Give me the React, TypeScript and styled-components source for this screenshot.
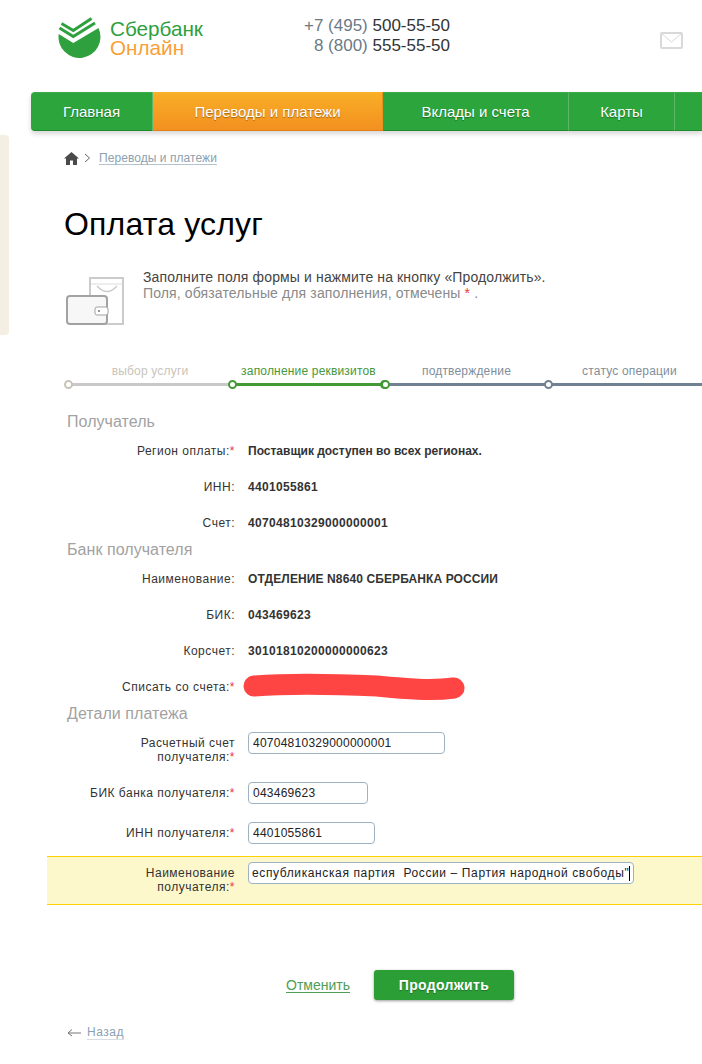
import React from 'react'
import styled, {createGlobalStyle} from 'styled-components'

const GlobalStyle = createGlobalStyle`
  html, body {
    margin: 0;
    padding: 0;
    background: #fff;
  }
  * {
    box-sizing: border-box;
  }
`

const Page = styled.div`
  position: relative;
  width: 702px;
  height: 1064px;
  overflow: hidden;
  background: #fff;
  font-family: 'Liberation Sans', Arial, sans-serif;
  font-size: 12px;
  color: #333;
`

const SideTab = styled.div`
  position: absolute;
  left: 0;
  top: 135px;
  width: 9px;
  height: 200px;
  background: #f5efe3;
  border-radius: 0 4px 4px 0;
`

const Header = styled.header`
  display: flex;
  height: 92px;
  padding-left: 58px;
`

const Logo = styled.div`
  display: flex;
  gap: 8px;
  width: 244px;
  padding-top: 15px;
`

const LogoText = styled.div`
  display: flex;
  flex-direction: column;
  padding-top: 4px;
  font-size: 20.7px;
  line-height: 19px;
`

const LogoLine = styled.span<{$orange?: boolean}>`
  color: ${(p) => (p.$orange ? '#f99f38' : '#2ea03e')};
`

const Phones = styled.div`
  width: 148px;
  padding-top: 16px;
  font-size: 17px;
  line-height: 20px;
  text-align: right;
  color: #333;
`

const PhoneCode = styled.span`
  color: #6c7a86;
`

const MailBox = styled.div`
  margin-left: 210px;
  padding-top: 32px;
`

const Nav = styled.nav`
  display: flex;
  height: 39px;
  margin-left: 31px;
  border-radius: 4px 0 0 4px;
  box-shadow: 0 3px 5px rgba(0, 0, 0, 0.16);
`

const NavItem = styled.a<{$w: number; $active?: boolean; $first?: boolean}>`
  display: flex;
  flex: 0 0 ${(p) => p.$w}px;
  align-items: center;
  justify-content: center;
  font-size: 15px;
  color: #fff;
  text-shadow: 0 1px 1px rgba(0, 0, 0, 0.35);
  border-top: 1px solid ${(p) => (p.$active ? '#f9b12a' : '#3cab4b')};
  border-bottom: 1px solid ${(p) => (p.$active ? '#e07f1a' : '#1f8a30')};
  border-right: 1px solid ${(p) => (p.$active ? '#e8901f' : '#5cb768')};
  background: ${(p) => (p.$active ? 'linear-gradient(#f8ae26, #f39020)' : '#2da53d')};
  border-radius: ${(p) => (p.$first ? '4px 0 0 4px' : '0')};
`

const Crumbs = styled.div`
  display: flex;
  align-items: center;
  height: 16px;
  margin-top: 19px;
  padding-left: 64px;
`

const CrumbLink = styled.a`
  margin-left: 6px;
  letter-spacing: 0.06px;
  color: #8ba1b0;
  text-decoration: underline;
  text-decoration-color: #b4c4ce;
  text-underline-offset: 2px;
`

const Title = styled.h1`
  height: 40px;
  margin: 38px 0 0;
  padding-left: 64px;
  font-size: 32px;
  font-weight: 400;
  line-height: 40px;
  letter-spacing: 0.17px;
  color: #000;
`

const Intro = styled.div`
  display: flex;
  height: 94px;
  margin-top: 25px;
  padding-left: 66px;
`

const IntroIcon = styled.div`
  flex: 0 0 77px;
  padding-top: 7px;
`

const IntroLine = styled.div<{$muted?: boolean}>`
  font-size: 14px;
  line-height: 16px;
  letter-spacing: 0.13px;
  color: ${(p) => (p.$muted ? '#8a8a8a' : '#444')};
`

const Asterisk = styled.span`
  color: #e8403a;
`

const Steps = styled.div`
  display: flex;
  height: 49px;
  width: 800px;
  margin-left: 68px;
`

const Step = styled.div<{$w: number}>`
  flex: 0 0 ${(p) => p.$w}px;
`

const StepLabel = styled.div<{$color: string}>`
  height: 16px;
  line-height: 16px;
  letter-spacing: 0.18px;
  text-align: center;
  color: ${(p) => p.$color};
`

const StepLine = styled.div<{$color: string}>`
  position: relative;
  height: 3px;
  margin-top: 4px;
  background: ${(p) => p.$color};
`

const StepNode = styled.span<{$color: string; $right?: boolean}>`
  position: absolute;
  top: -3px;
  ${(p) => (p.$right ? 'right: -4px;' : 'left: -4px;')}
  width: 9px;
  height: 9px;
  border: 2px solid ${(p) => p.$color};
  border-radius: 50%;
  background: #fff;
`

const SectionTitle = styled.h2`
  height: 20px;
  margin: 0;
  padding-left: 67px;
  font-size: 16px;
  font-weight: 400;
  line-height: 20px;
  letter-spacing: 0.05px;
  color: #a2a2a2;
`

const InfoRow = styled.div`
  display: grid;
  grid-template-columns: 235px 1fr;
  column-gap: 13px;
  align-items: center;
  height: 36px;
  padding-top: 1px;
`

const Label = styled.div`
  text-align: right;
  line-height: 14px;
  letter-spacing: 0.5px;
  color: #333;
`

const Required = styled.span`
  color: #f0323c;
`

const Value = styled.div<{$spacing?: number}>`
  font-weight: 700;
  letter-spacing: ${(p) => p.$spacing ?? 0.33}px;
  color: #333;
`

const Scribble = styled.div`
  height: 0;
  margin-left: -5px;
  transform: translateY(-14px);
`

const InputRow = styled.div<{$h: number; $top?: number}>`
  display: grid;
  grid-template-columns: 235px 1fr;
  column-gap: 13px;
  height: ${(p) => p.$h}px;
  margin-top: ${(p) => p.$top ?? 0}px;
`

const FieldLabel = styled(Label)`
  padding-top: 4px;
`

const Field = styled.input<{$w: number; $spacing?: number; $pad?: number}>`
  display: block;
  width: ${(p) => p.$w}px;
  height: 22px;
  padding: 0 ${(p) => p.$pad ?? 4}px;
  border: 1px solid #9fb2c2;
  border-radius: 4px;
  outline: none;
  background: #fff;
  font-family: inherit;
  font-size: 12px;
  letter-spacing: ${(p) => p.$spacing ?? 0.25}px;
  color: #222;
`

const HighlightRow = styled.div`
  display: grid;
  grid-template-columns: 188px 1fr;
  column-gap: 13px;
  height: 49px;
  margin-left: 47px;
  padding-top: 5px;
  border-top: 1px solid #ffd100;
  border-bottom: 1px solid #ffd100;
  background: #fdf7cc;
`

const CaretField = styled.div`
  position: relative;
  width: 386px;
`

const Caret = styled.span`
  position: absolute;
  top: 4px;
  right: 4px;
  width: 1px;
  height: 15px;
  background: #000;
`

const Actions = styled.div`
  display: flex;
  align-items: center;
  gap: 24px;
  margin-top: 65px;
  padding-left: 286px;
`

const CancelLink = styled.a`
  font-size: 14px;
  color: #4f9d57;
  text-decoration: underline;
  text-underline-offset: 2px;
`

const SubmitButton = styled.button`
  width: 140px;
  height: 30px;
  border: 0;
  border-radius: 3px;
  background: #2b9f36;
  box-shadow: 0 1px 3px rgba(0, 0, 0, 0.4);
  font-family: inherit;
  font-size: 14px;
  font-weight: 700;
  letter-spacing: 0.33px;
  color: #fff;
  text-shadow: 0 1px 1px rgba(0, 0, 0, 0.3);
`

const BackRow = styled.div`
  display: flex;
  align-items: center;
  gap: 6px;
  margin-top: 25px;
  padding-left: 67px;
`

const BackLink = styled.a`
  letter-spacing: 0.5px;
  color: #8ba1b0;
  border-bottom: 1px solid #d5dee4;
`

const navItems = [
  {label: 'Главная', w: 122, first: true},
  {label: 'Переводы и платежи', w: 230, active: true},
  {label: 'Вклады и счета', w: 186},
  {label: 'Карты', w: 106},
  {label: '', w: 60},
]

const steps = [
  {label: 'выбор услуги', w: 164, text: '#c9c4ba', line: '#c8c8c8', node: '#c8c4b8'},
  {label: 'заполнение реквизитов', w: 153, text: '#46983a', line: '#429a35', node: '#429a35', end: true},
  {label: 'подтверждение', w: 163, text: '#7f8e9b', line: '#708291', node: '#429a35'},
  {label: 'статус операции', w: 163, text: '#7f8e9b', line: '#708291', node: '#708291'},
]

const LogoMark = () => (
  <svg width="44" height="44" viewBox="58 15 44 44">
    <path d="M58.7 34 L73.3 43 L98.5 28 A21 21 0 1 1 58.7 34 Z" fill="#2ea03e" />
    <g fill="none" stroke="#2ea03e" strokeWidth="3">
      <path d="M61.5 23.5 L73.3 30.5 L91.5 18.5" />
      <path d="M59.5 28 L73.3 36.5 L95 23" />
    </g>
  </svg>
)

const MailIcon = () => (
  <svg width="23" height="17" viewBox="0 0 23 17" fill="none" stroke="#d9d9d9">
    <rect x="1" y="1" width="21" height="15" rx="1" strokeWidth="2" />
    <path d="M2 2 L11.5 10 L21 2" />
  </svg>
)

const HomeIcon = () => (
  <svg width="15" height="13" viewBox="0 0 15 13" fill="#4a4a4a">
    <path d="M7.5 0 L15 6.5 L13 6.5 L13 13 L9 13 L9 8.5 L6 8.5 L6 13 L2 13 L2 6.5 L0 6.5 Z" />
  </svg>
)

const CrumbArrow = () => (
  <svg width="14" height="10" viewBox="0 0 14 10" fill="none" stroke="#666">
    <path d="M6 1 L10.5 5 L6 9" />
  </svg>
)

const WalletIcon = () => (
  <svg width="60" height="52" viewBox="66 275 60 52">
    <rect x="90" y="277" width="33" height="46" fill="#fff" stroke="#cbcbcb" strokeWidth="2" />
    <path d="M91 283 H122" stroke="#dcdcdc" />
    <path d="M97 285 Q107 296 117 285" fill="none" stroke="#cbcbcb" strokeWidth="1.5" />
    <rect x="67" y="295" width="40" height="28" rx="3" fill="#f7f7f7" stroke="#a2a2a2" strokeWidth="2" />
    <rect x="95" y="306" width="13" height="8" rx="2" fill="#fff" stroke="#a2a2a2" />
    <circle cx="99" cy="310" r="1" fill="#777" />
  </svg>
)

const RedScribble = () => (
  <svg width="224" height="30" viewBox="241 673 224 30" fill="none">
    <path
      d="M252 686 C290 683 330 684 375 686 C405 689 430 691 452 688"
      stroke="#ff4444"
      strokeWidth="21"
      strokeLinecap="round"
    />
  </svg>
)

const BackArrow = () => (
  <svg width="14" height="9" viewBox="0 0 14 9" fill="none" stroke="#777">
    <path d="M14 5 H1 M5 1.5 L1 5 L5 8" />
  </svg>
)

const App = () => (
  <Page>
    <GlobalStyle />
    <SideTab />
    <Header>
      <Logo>
        <LogoMark />
        <LogoText>
          <LogoLine>Сбербанк</LogoLine>
          <LogoLine $orange>Онлайн</LogoLine>
        </LogoText>
      </Logo>
      <Phones>
        <div>
          <PhoneCode>+7 (495)</PhoneCode> 500-55-50
        </div>
        <div>
          <PhoneCode>8 (800)</PhoneCode> 555-55-50
        </div>
      </Phones>
      <MailBox>
        <MailIcon />
      </MailBox>
    </Header>

    <Nav>
      {navItems.map((item, i) => (
        <NavItem key={i} $w={item.w} $active={item.active} $first={item.first}>
          {item.label}
        </NavItem>
      ))}
    </Nav>

    <Crumbs>
      <HomeIcon />
      <CrumbArrow />
      <CrumbLink>Переводы и платежи</CrumbLink>
    </Crumbs>

    <Title>Оплата услуг</Title>

    <Intro>
      <IntroIcon>
        <WalletIcon />
      </IntroIcon>
      <div>
        <IntroLine>Заполните поля формы и нажмите на кнопку «Продолжить».</IntroLine>
        <IntroLine $muted>
          Поля, обязательные для заполнения, отмечены <Asterisk>*</Asterisk> .
        </IntroLine>
      </div>
    </Intro>

    <Steps>
      {steps.map((step) => (
        <Step key={step.label} $w={step.w}>
          <StepLabel $color={step.text}>{step.label}</StepLabel>
          <StepLine $color={step.line}>
            <StepNode $color={step.node} />
            {step.end && <StepNode $color={step.node} $right />}
          </StepLine>
        </Step>
      ))}
    </Steps>

    <SectionTitle>Получатель</SectionTitle>
    <InfoRow>
      <Label>
        Регион оплаты:<Required>*</Required>
      </Label>
      <Value $spacing={0}>Поставщик доступен во всех регионах.</Value>
    </InfoRow>
    <InfoRow>
      <Label>ИНН:</Label>
      <Value>4401055861</Value>
    </InfoRow>
    <InfoRow>
      <Label>Счет:</Label>
      <Value>40704810329000000001</Value>
    </InfoRow>

    <SectionTitle>Банк получателя</SectionTitle>
    <InfoRow>
      <Label>Наименование:</Label>
      <Value $spacing={0.11}>ОТДЕЛЕНИЕ N8640 СБЕРБАНКА РОССИИ</Value>
    </InfoRow>
    <InfoRow>
      <Label>БИК:</Label>
      <Value>043469623</Value>
    </InfoRow>
    <InfoRow>
      <Label>Корсчет:</Label>
      <Value>30101810200000000623</Value>
    </InfoRow>
    <InfoRow>
      <Label>
        Списать со счета:<Required>*</Required>
      </Label>
      <Scribble>
        <RedScribble />
      </Scribble>
    </InfoRow>

    <SectionTitle>Детали платежа</SectionTitle>
    <InputRow $h={50} $top={8}>
      <FieldLabel>
        Расчетный счет
        <br />
        получателя:<Required>*</Required>
      </FieldLabel>
      <Field $w={197} readOnly value="40704810329000000001" />
    </InputRow>
    <InputRow $h={40}>
      <FieldLabel>
        БИК банка получателя:<Required>*</Required>
      </FieldLabel>
      <Field $w={120} readOnly value="043469623" />
    </InputRow>
    <InputRow $h={34}>
      <FieldLabel>
        ИНН получателя:<Required>*</Required>
      </FieldLabel>
      <Field $w={127} readOnly value="4401055861" />
    </InputRow>
    <HighlightRow>
      <FieldLabel>
        Наименование
        <br />
        получателя:<Required>*</Required>
      </FieldLabel>
      <CaretField>
        <Field
          $w={386}
          $spacing={0.62}
          $pad={3}
          readOnly
          value={'еспубликанская партия  России – Партия народной свободы"'}
        />
        <Caret />
      </CaretField>
    </HighlightRow>

    <Actions>
      <CancelLink>Отменить</CancelLink>
      <SubmitButton>Продолжить</SubmitButton>
    </Actions>

    <BackRow>
      <BackArrow />
      <BackLink>Назад</BackLink>
    </BackRow>
  </Page>
)

export default App
